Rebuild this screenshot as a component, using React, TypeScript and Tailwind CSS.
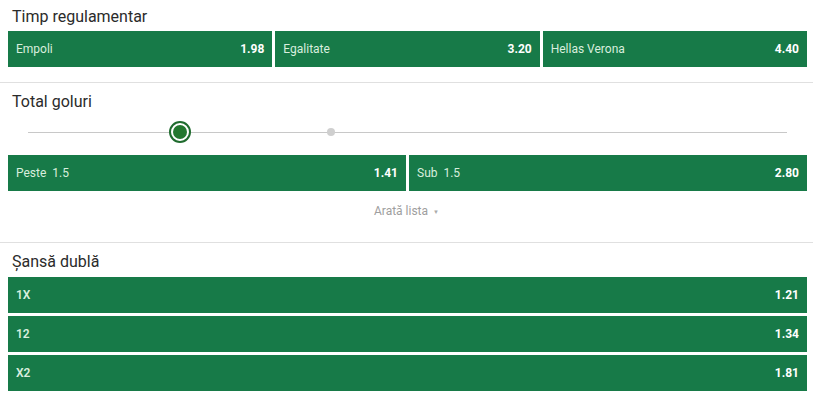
import React from "react";

const GREEN = "bg-[#177a48]";

function OddButton({ label, odd, bold }: { label: string; odd: string; bold?: boolean }) {
  return (
    <div className={`${GREEN} h-9 flex items-center justify-between px-2 text-[12px]`}>
      <span className={`text-[#d9eede] ${bold ? "font-semibold" : ""} whitespace-pre`}>{label}</span>
      <span className="text-white font-bold">{odd}</span>
    </div>
  );
}

function Title({ children, className }: { children: React.ReactNode; className?: string }) {
  return (
    <div className={`flex items-center pl-3 text-[16px] text-[#2b2b2b] ${className ?? ""}`}>
      {children}
    </div>
  );
}

export default function App() {
  return (
    <div className="w-[813px] h-[398px] bg-white font-['Roboto',sans-serif] overflow-hidden">
      {/* Timp regulamentar */}
      <section className="pb-[15px] border-b border-[#e0e0e0]">
        <Title className="h-[31px] pt-[2px]">Timp regulamentar</Title>
        <div className="grid grid-cols-3 gap-[3px] pl-2 pr-[6px]">
          <OddButton label="Empoli" odd="1.98" />
          <OddButton label="Egalitate" odd="3.20" />
          <OddButton label="Hellas Verona" odd="4.40" />
        </div>
      </section>

      {/* Total goluri */}
      <section className="pb-[11px] border-b border-[#e0e0e0]">
        <Title className="h-[38px]">Total goluri</Title>
        <div className="h-[22px] ml-[28px] w-[759px] relative flex items-center">
          <div className="h-px w-full bg-[#c8c8c8]" />
          <div className="absolute left-[299px] top-[7px] w-[8px] h-[8px] rounded-full bg-[#cfcfcf]" />
          <div className="absolute left-[141px] top-0 w-[22px] h-[22px] rounded-full border-2 border-[#1f6b2e] bg-white flex items-center justify-center">
            <div className="w-[14px] h-[14px] rounded-full bg-[#23772f]" />
          </div>
        </div>
        <div className="grid grid-cols-2 gap-[3px] pl-2 pr-[6px] mt-[12px]">
          <OddButton label="Peste  1.5" odd="1.41" />
          <OddButton label="Sub  1.5" odd="2.80" />
        </div>
        <div className="h-[40px] flex items-center justify-center text-[12px] text-[#9e9e9e]">
          <span>Arată lista</span>
          <span className="ml-[5px] mt-[2px] text-[6px] leading-none text-[#aaaaaa]">▼</span>
        </div>
      </section>

      {/* Șansă dublă */}
      <section>
        <Title className="h-[34px] pt-[3px]">Șansă dublă</Title>
        <div className="flex flex-col gap-[3px] pl-2 pr-[6px]">
          <OddButton label="1X" odd="1.21" bold />
          <OddButton label="12" odd="1.34" bold />
          <OddButton label="X2" odd="1.81" bold />
        </div>
      </section>
    </div>
  );
}
